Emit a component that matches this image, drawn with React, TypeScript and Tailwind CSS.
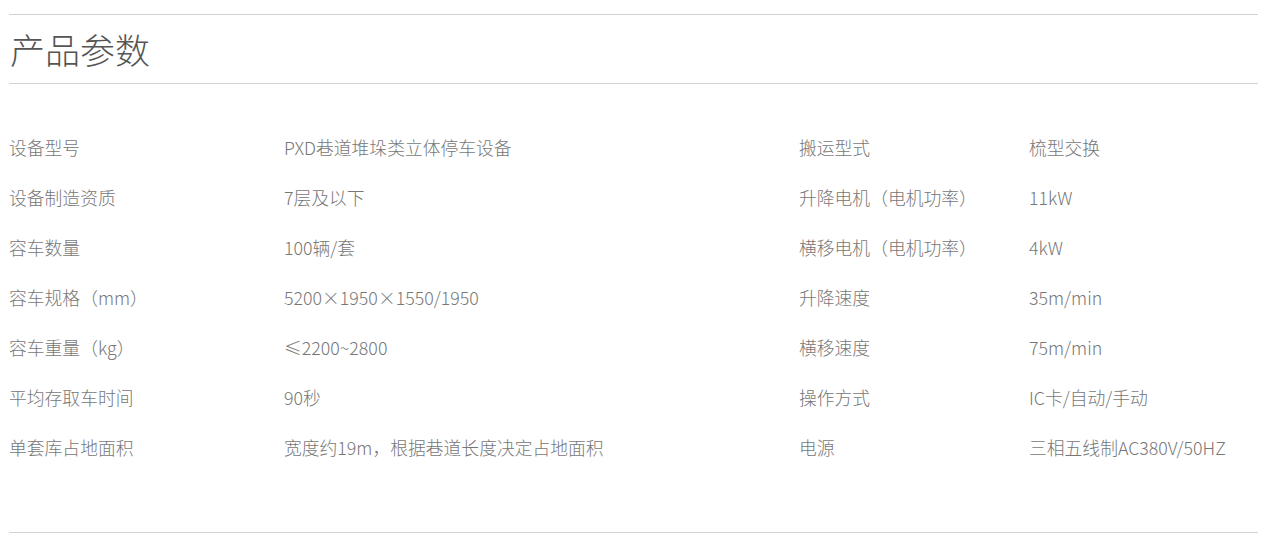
const rows: [string, string, string, string][] = [
  ["设备型号", "PXD巷道堆垛类立体停车设备", "搬运型式", "梳型交换"],
  ["设备制造资质", "7层及以下", "升降电机（电机功率）", "11kW"],
  ["容车数量", "100辆/套", "横移电机（电机功率）", "4kW"],
  ["容车规格（mm）", "5200×1950×1550/1950", "升降速度", "35m/min"],
  ["容车重量（kg）", "≤2200~2800", "横移速度", "75m/min"],
  ["平均存取车时间", "90秒", "操作方式", "IC卡/自动/手动"],
  ["单套库占地面积", "宽度约19m，根据巷道长度决定占地面积", "电源", "三相五线制AC380V/50HZ"],
];

export default function App() {
  return (
    <div
      className="w-[1268px] h-[542px] bg-white pl-[9px] pr-[10px] pt-[14px] text-[#777]"
      style={{ fontFamily: '"Noto Sans CJK SC", "Noto Sans", sans-serif' }}
    >
      {/* Title */}
      <div className="border-t border-b border-[#d2d2d2] h-[70px] flex items-center">
        <h2 className="text-[35px] font-light text-[#555] leading-none pl-[1px] pb-[2px]">产品参数</h2>
      </div>

      {/* Params table */}
      <div className="pt-[39px] pb-[59px] border-b border-[#d2d2d2]">
        {rows.map((r) => (
          <div
            key={r[0]}
            className="grid grid-cols-[275px_515px_230px_1fr] h-[50px] items-center text-[17.8px] font-light leading-none"
          >
            <div>{r[0]}</div>
            <div>{r[1]}</div>
            <div>{r[2]}</div>
            <div>{r[3]}</div>
          </div>
        ))}
      </div>
    </div>
  );
}
